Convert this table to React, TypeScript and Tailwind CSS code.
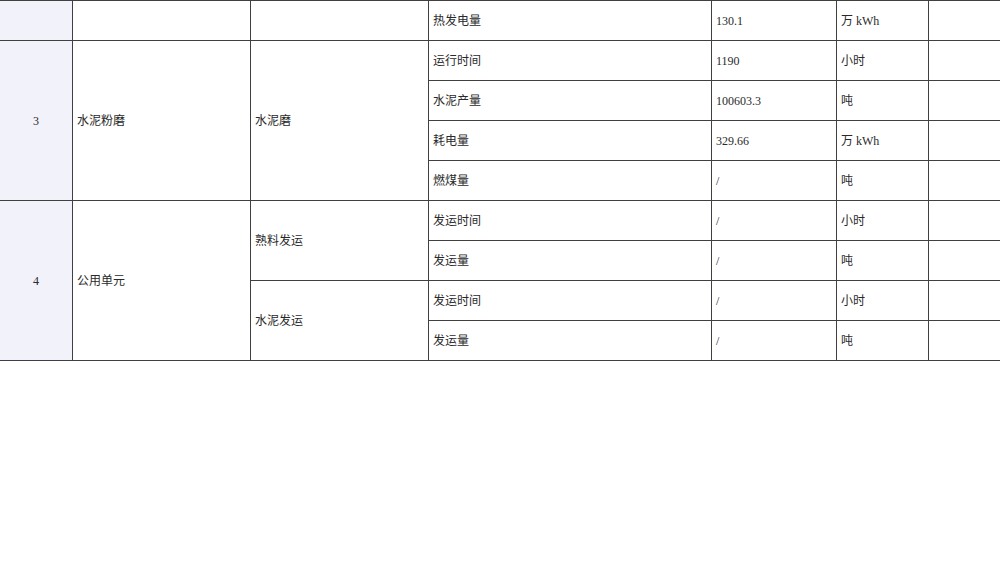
import React from "react";

const cell = "bg-white flex items-center px-[4px] text-[12px] text-[#2a2a2a]";
const idx = "bg-[#f2f2fa] flex items-center justify-center text-[12px] text-[#2a2a2a]";

export default function App() {
  return (
    <div
      className="w-[1000px] h-[583px] bg-white overflow-hidden"
      style={{ fontFamily: '"Liberation Serif", "Noto Sans CJK SC", serif' }}
    >
      <div className="bg-[#404040] py-px">
        <div className="grid grid-cols-[72px_177px_177px_282px_124px_91px_1fr] grid-rows-[repeat(9,39px)] gap-px">
          {/* row 1 */}
          <div className={`${idx} col-start-1 row-start-1`}></div>
          <div className={`${cell} col-start-2 row-start-1`}></div>
          <div className={`${cell} col-start-3 row-start-1`}></div>
          <div className={`${cell} col-start-4 row-start-1`}>热发电量</div>
          <div className={`${cell} col-start-5 row-start-1`}>130.1</div>
          <div className={`${cell} col-start-6 row-start-1`}>万 kWh</div>
          <div className={`${cell} col-start-7 row-start-1`}></div>

          {/* group 3 */}
          <div className={`${idx} col-start-1 row-start-2 row-span-4`}>3</div>
          <div className={`${cell} col-start-2 row-start-2 row-span-4`}>水泥粉磨</div>
          <div className={`${cell} col-start-3 row-start-2 row-span-4`}>水泥磨</div>

          <div className={`${cell} col-start-4 row-start-2`}>运行时间</div>
          <div className={`${cell} col-start-5 row-start-2`}>1190</div>
          <div className={`${cell} col-start-6 row-start-2`}>小时</div>
          <div className={`${cell} col-start-7 row-start-2`}></div>

          <div className={`${cell} col-start-4 row-start-3`}>水泥产量</div>
          <div className={`${cell} col-start-5 row-start-3`}>100603.3</div>
          <div className={`${cell} col-start-6 row-start-3`}>吨</div>
          <div className={`${cell} col-start-7 row-start-3`}></div>

          <div className={`${cell} col-start-4 row-start-4`}>耗电量</div>
          <div className={`${cell} col-start-5 row-start-4`}>329.66</div>
          <div className={`${cell} col-start-6 row-start-4`}>万 kWh</div>
          <div className={`${cell} col-start-7 row-start-4`}></div>

          <div className={`${cell} col-start-4 row-start-5`}>燃煤量</div>
          <div className={`${cell} col-start-5 row-start-5`}>/</div>
          <div className={`${cell} col-start-6 row-start-5`}>吨</div>
          <div className={`${cell} col-start-7 row-start-5`}></div>

          {/* group 4 */}
          <div className={`${idx} col-start-1 row-start-6 row-span-4`}>4</div>
          <div className={`${cell} col-start-2 row-start-6 row-span-4`}>公用单元</div>
          <div className={`${cell} col-start-3 row-start-6 row-span-2`}>熟料发运</div>
          <div className={`${cell} col-start-3 row-start-8 row-span-2`}>水泥发运</div>

          <div className={`${cell} col-start-4 row-start-6`}>发运时间</div>
          <div className={`${cell} col-start-5 row-start-6`}>/</div>
          <div className={`${cell} col-start-6 row-start-6`}>小时</div>
          <div className={`${cell} col-start-7 row-start-6`}></div>

          <div className={`${cell} col-start-4 row-start-7`}>发运量</div>
          <div className={`${cell} col-start-5 row-start-7`}>/</div>
          <div className={`${cell} col-start-6 row-start-7`}>吨</div>
          <div className={`${cell} col-start-7 row-start-7`}></div>

          <div className={`${cell} col-start-4 row-start-8`}>发运时间</div>
          <div className={`${cell} col-start-5 row-start-8`}>/</div>
          <div className={`${cell} col-start-6 row-start-8`}>小时</div>
          <div className={`${cell} col-start-7 row-start-8`}></div>

          <div className={`${cell} col-start-4 row-start-9`}>发运量</div>
          <div className={`${cell} col-start-5 row-start-9`}>/</div>
          <div className={`${cell} col-start-6 row-start-9`}>吨</div>
          <div className={`${cell} col-start-7 row-start-9`}></div>
        </div>
      </div>
    </div>
  );
}
